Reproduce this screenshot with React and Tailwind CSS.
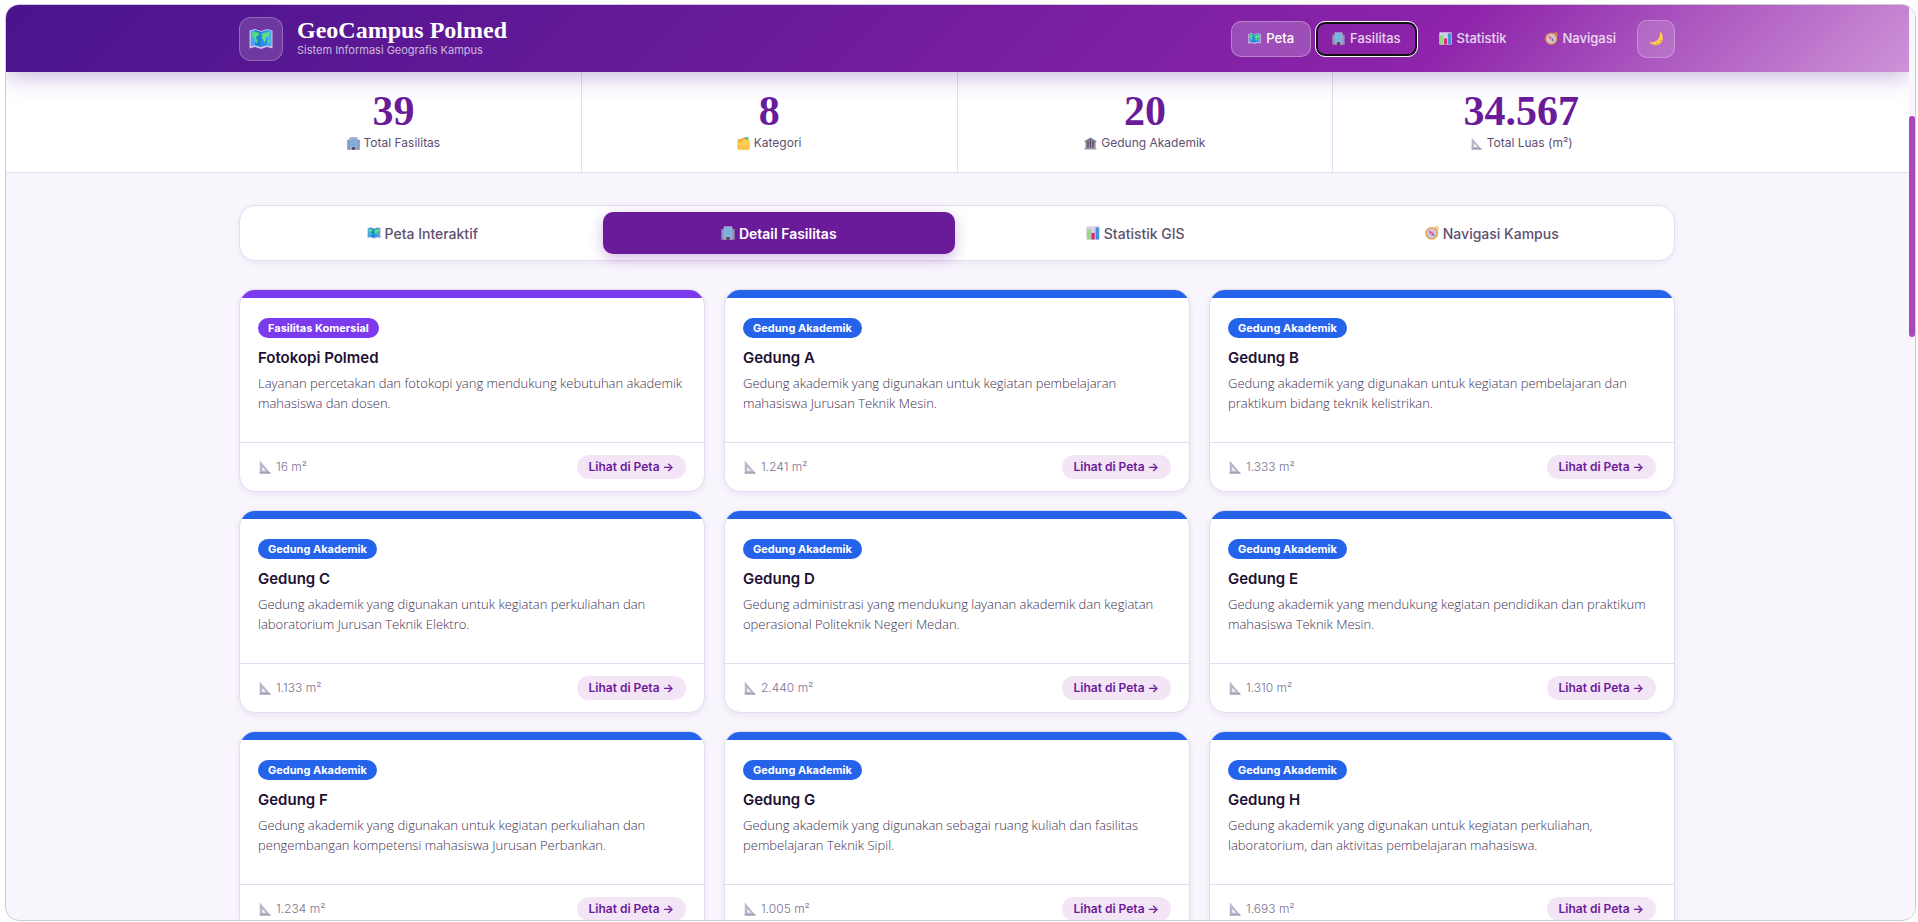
import React from "react";

function MapIcon({ className }) {
  return (
    <svg viewBox="0 0 24 24" className={className} aria-hidden="true">
      <path d="M0.5 3.5 L6 2 L12 4 L18 2 L23.5 3.5 V21.5 L18 20 L12 22 L6 20 L0.5 21.5 Z" fill="#cfc3e6" />
      <path d="M1.8 4 L6 3 L12 5 V20 L6 18.200 L1.800 19.300 Z" fill="#42a5f5" />
      <path d="M12 5 L18 3 L22.200 4 V19.300 L18 18.200 L12 20 Z" fill="#2b8de3" />
      <path d="M6 3 L12 5 V20 L6 18.200 Z" fill="#1f7ed6" />
      <path d="M18 3 L22.200 4 V19.300 L18 18.200 Z" fill="#4aa8f7" />
      <path d="M2.500 6 L6 4.800 L10.500 6.300 L9.500 8.500 L7.500 9.500 L7 11.500 L8.500 12.500 L8.500 14.500 L7 16.800 L6 14 L5.500 11.500 L3.500 9.500 Z" fill="#4fdc7c" />
      <path d="M12.500 7 L16 5.500 L21 5.300 L20.500 8.500 L19 10.500 L17.500 9.500 L16.500 14 L15 15.500 L14 12 L12.500 11 L13.500 9 Z" fill="#5be082" />
      <path d="M18.500 13 L21 12.500 L21.300 15.200 L19 15.300 Z" fill="#4fdc7c" />
    </svg>
  );
}

function BuildingIcon({ className }) {
  return (
    <svg viewBox="0 0 24 24" className={className} aria-hidden="true">
      <path d="M0.500 5 H7 V23.500 H0.500 Z" fill="#8f86a8" />
      <path d="M17 5 H23.500 V23.500 H17 Z" fill="#8f86a8" />
      <rect x="4.500" y="0.500" width="15" height="23" rx="1" fill="#a9a3c0" />
      <rect x="6.500" y="2.500" width="11" height="15.500" fill="#6ec6f5" />
      <path d="M10.200 2.500 V18 M13.800 2.500 V18 M6.500 6.300 H17.500 M6.500 10.200 H17.500 M6.500 14.100 H17.500" stroke="#8796c4" strokeWidth="1" />
      <rect x="9" y="19" width="6" height="4.500" fill="#4a3f63" />
      <path d="M2.500 8 V20.500 M21.500 8 V20.500" stroke="#6fb6e2" strokeWidth="1.300" />
    </svg>
  );
}

function ChartIcon({ className }) {
  return (
    <svg viewBox="0 0 24 24" className={className} aria-hidden="true">
      <rect x="0.500" y="0.500" width="23" height="23" rx="1.500" fill="#d9d2e8" />
      <path d="M1 6.500 H23 M1 12 H23 M1 17.500 H23 M8.300 1 V23 M15.700 1 V23" stroke="#bdb4d2" strokeWidth="0.800" />
      <rect x="2" y="6" width="5.500" height="17" fill="#8fdc80" />
      <rect x="9.300" y="12" width="5.500" height="11" fill="#e0246c" />
      <rect x="16.700" y="2.500" width="5.500" height="20.500" fill="#3f92e0" />
    </svg>
  );
}

function CompassIcon({ className }) {
  return (
    <svg viewBox="0 0 24 24" className={className} aria-hidden="true">
      <circle cx="20" cy="4" r="2.600" fill="none" stroke="#f5a623" strokeWidth="1.800" />
      <circle cx="11.500" cy="12.500" r="11" fill="#e8a04e" />
      <circle cx="11.500" cy="12.500" r="8.300" fill="#d0c5de" />
      <path d="M6.500 7.500 L13.500 11 L10 14.500 Z" fill="#e0315f" />
      <path d="M16.500 17.500 L13.500 11 L10 14.500 Z" fill="#655a80" />
      <circle cx="11.700" cy="12.700" r="1.300" fill="#f4f0fa" />
    </svg>
  );
}

function MoonIcon({ className }) {
  return (
    <svg viewBox="0 0 24 24" className={className} aria-hidden="true">
      <path d="M17.500 1 C26 8 23 22 11.500 23 C6.500 23.300 2.500 20.500 1 17.200 C7 19 13 17 15.800 12 C17.800 8.400 18 4.500 17.500 1 Z" fill="#fbb93c" />
      <path d="M17.500 1 C24 7 22 17.500 12.500 20 C8 21 3.500 19.500 1 17.200 C7 19 13 17 15.800 12 C17.800 8.400 18 4.500 17.500 1 Z" fill="#ffd257" />
      <circle cx="18.500" cy="15" r="1.300" fill="#eb9c35" />
      <circle cx="13" cy="19.500" r="1" fill="#eb9c35" />
    </svg>
  );
}

function FolderIcon({ className }) {
  return (
    <svg viewBox="0 0 24 24" className={className} aria-hidden="true">
      <rect x="13" y="0.500" width="8" height="5" rx="1" fill="#35c07a" />
      <rect x="8" y="2" width="9" height="5" rx="1" fill="#f5a04a" />
      <path d="M1 3.500 H8 L10 5.500 H23 V21 A2 2 0 0 1 21 23 H3 A2 2 0 0 1 1 21 Z" fill="#f9bf45" />
      <path d="M1 9 H8 L11 5 H23 V21 A2 2 0 0 1 21 23 H3 A2 2 0 0 1 1 21 Z" fill="#ffd04f" />
      <path d="M1 15 H23 V21 A2 2 0 0 1 21 23 H3 A2 2 0 0 1 1 21 Z" fill="#ffc34d" />
      <path d="M4 7.500 H9" stroke="#ee6a44" strokeWidth="1.500" />
    </svg>
  );
}

function MuseumIcon({ className }) {
  return (
    <svg viewBox="0 0 24 24" className={className} aria-hidden="true">
      <path d="M12 1 L23 7.500 V9 H1 V7.500 Z" fill="#8a8098" />
      <rect x="3" y="9" width="18" height="11" fill="#4d4560" />
      <path d="M5 9.500 V20 M9.700 9.500 V20 M14.300 9.500 V20 M19 9.500 V20" stroke="#a79fb5" strokeWidth="2.200" />
      <rect x="1" y="20" width="22" height="3" fill="#9c93ab" />
      <circle cx="12" cy="5.800" r="1.400" fill="#4d4560" />
    </svg>
  );
}

function RulerIcon({ className }) {
  return (
    <svg viewBox="0 0 24 24" className={className} aria-hidden="true">
      <path fillRule="evenodd" d="M3 1 L22 23 H3 Z M7.500 12 V18.500 H13.200 Z" fill="#bdb5cb" />
      <path d="M3 20.500 H20 L22 23 H3 Z" fill="#9f96b0" />
      <path d="M6 21 V22.500 M9 21 V22.500 M12 21 V22.500 M15 21 V22.500" stroke="#d9d3e3" strokeWidth="0.800" />
    </svg>
  );
}

const navItems = [
  { label: "Peta", Icon: MapIcon, style: "border-white/30 bg-white/20 text-white" },
  {
    label: "Fasilitas",
    Icon: BuildingIcon,
    style: "border-white text-white/80 shadow-[inset_0_0_0_2px_#101010]",
  },
  { label: "Statistik", Icon: ChartIcon, style: "border-transparent text-white/80" },
  { label: "Navigasi", Icon: CompassIcon, style: "border-transparent text-white/80" },
];

const stats = [
  { value: "39", label: "Total Fasilitas", Icon: BuildingIcon },
  { value: "8", label: "Kategori", Icon: FolderIcon },
  { value: "20", label: "Gedung Akademik", Icon: MuseumIcon },
  { value: "34.567", label: "Total Luas (m²)", Icon: RulerIcon },
];

const tabs = [
  { label: "Peta Interaktif", Icon: MapIcon },
  { label: "Detail Fasilitas", Icon: BuildingIcon, active: true },
  { label: "Statistik GIS", Icon: ChartIcon },
  { label: "Navigasi Kampus", Icon: CompassIcon },
];

const facilities = [
  ["Fotokopi Polmed", "Layanan percetakan dan fotokopi yang mendukung kebutuhan akademik", "mahasiswa dan dosen.", "16", "komersial"],
  ["Gedung A", "Gedung akademik yang digunakan untuk kegiatan pembelajaran", "mahasiswa Jurusan Teknik Mesin.", "1.241"],
  ["Gedung B", "Gedung akademik yang digunakan untuk kegiatan pembelajaran dan", "praktikum bidang teknik kelistrikan.", "1.333"],
  ["Gedung C", "Gedung akademik yang digunakan untuk kegiatan perkuliahan dan", "laboratorium Jurusan Teknik Elektro.", "1.133"],
  ["Gedung D", "Gedung administrasi yang mendukung layanan akademik dan kegiatan", "operasional Politeknik Negeri Medan.", "2.440"],
  ["Gedung E", "Gedung akademik yang mendukung kegiatan pendidikan dan praktikum", "mahasiswa Teknik Mesin.", "1.310"],
  ["Gedung F", "Gedung akademik yang digunakan untuk kegiatan perkuliahan dan", "pengembangan kompetensi mahasiswa Jurusan Perbankan.", "1.234"],
  ["Gedung G", "Gedung akademik yang digunakan sebagai ruang kuliah dan fasilitas", "pembelajaran Teknik Sipil.", "1.005"],
  ["Gedung H", "Gedung akademik yang digunakan untuk kegiatan perkuliahan,", "laboratorium, dan aktivitas pembelajaran mahasiswa.", "1.693"],
];

function FacilityCard({ name, lines, area, commercial }) {
  const tone = commercial ? "bg-[#7c3aed]" : "bg-[#2563eb]";
  return (
    <article className="flex flex-col overflow-hidden rounded-2xl border border-[#e4dcf1] bg-white shadow-[0_2px_6px_rgba(74,20,140,0.08)]">
      <div className={`h-2 ${tone}`} />
      <div className="flex flex-1 flex-col items-start px-[18px] pt-5 pb-[29px]">
        <span className={`rounded-full px-[10px] text-[11px] leading-5 font-bold text-white ${tone}`}>
          {commercial ? "Fasilitas Komersial" : "Gedung Akademik"}
        </span>
        <h3 className="mt-2 text-[15px] leading-6 font-semibold text-[#1e1033]">{name}</h3>
        <p className="mt-[3px] font-['Open_Sans','Liberation_Sans',sans-serif] text-[13px] leading-5 font-light text-[#3d3050] 2xl:whitespace-nowrap">
          {lines[0]}
          <br />
          {lines[1]}
        </p>
      </div>
      <div className="flex items-center justify-between border-t border-[#e4dcf1] px-[18px] py-3">
        <span className="flex items-center gap-1 text-[12px] leading-5 font-light text-[#7d7192]">
          <RulerIcon className="size-[14px]" />
          {area} m²
        </span>
        <button type="button" className="rounded-full bg-[#f3e5f5] px-3 text-[12px] leading-6 font-semibold text-[#6a1b9a]">
          Lihat di Peta →
        </button>
      </div>
    </article>
  );
}

export default function App() {
  return (
    <div className="h-screen bg-white pt-1 pr-[2px] pb-[1px] pl-[5px] font-['Inter','Liberation_Sans',sans-serif]">
      <div className="flex h-full overflow-hidden rounded-[14px] border border-[#cfcbd3] bg-[#f8f5fc]">
        <div className="min-w-0 flex-1 overflow-hidden">
          <header className="relative bg-[linear-gradient(135deg,#4a148c_0%,#6a1b9a_40%,#8e24aa_75%,#ce93d8_100%)] shadow-[0_6px_22px_rgba(74,20,140,0.28)]">
            <div className="mx-auto flex h-[67px] max-w-[1503px] items-center justify-between pr-[34px] pl-[33px]">
              <div className="flex items-center gap-[14px]">
                <div className="flex size-11 items-center justify-center rounded-xl border border-white/25 bg-white/15">
                  <MapIcon className="size-6" />
                </div>
                <div className="pb-[2px]">
                  <h1 className="font-['Liberation_Serif',serif] text-2xl leading-6 font-bold text-white">GeoCampus Polmed</h1>
                  <p className="text-[11px] leading-4 text-white/70">Sistem Informasi Geografis Kampus</p>
                </div>
              </div>
              <nav className="flex items-center gap-1">
                {navItems.map(({ label, Icon, style }) => (
                  <button
                    key={label}
                    type="button"
                    className={`flex h-9 items-center gap-[5px] rounded-[10px] border px-4 text-[13px] font-medium ${style}`}
                  >
                    <Icon className="size-[13px]" />
                    {label}
                  </button>
                ))}
                <button
                  type="button"
                  aria-label="Mode gelap"
                  className="flex size-[38px] items-center justify-center rounded-[10px] border border-white/25 bg-white/15"
                >
                  <MoonIcon className="size-[15px]" />
                </button>
              </nav>
            </div>
          </header>

          <section className="border-b border-[#e4dcf1] bg-white">
            <div className="mx-auto grid max-w-[1503px] grid-cols-4 divide-x divide-[#e4dcf1]">
              {stats.map(({ value, label, Icon }) => (
                <div key={label} className="flex flex-col items-center gap-[2px] py-[19px]">
                  <div className="font-['Liberation_Serif',serif] text-[42px] leading-10 font-bold text-[#6a1b9a]">{value}</div>
                  <div className="flex items-center gap-1 text-[12px] leading-5 text-[#5d5070]">
                    <Icon className="size-[13px]" />
                    {label}
                  </div>
                </div>
              ))}
            </div>
          </section>

          <main className="mx-auto max-w-[1503px] pt-8 pr-[34px] pl-[33px]">
            <div className="grid grid-cols-4 gap-1 rounded-2xl border border-[#e4dcf1] bg-white p-[6px] shadow-[0_2px_6px_rgba(74,20,140,0.06)]">
              {tabs.map(({ label, Icon, active }) => (
                <button
                  key={label}
                  type="button"
                  className={
                    active
                      ? "flex h-[42px] items-center justify-center gap-1 rounded-[10px] bg-[#6a1b9a] text-[14px] font-semibold text-white shadow-[0_4px_14px_rgba(106,27,154,0.3)]"
                      : "flex h-[42px] items-center justify-center gap-1 rounded-[10px] text-[14px] font-medium text-[#5d5070]"
                  }
                >
                  <Icon className="size-[14px]" />
                  {label}
                </button>
              ))}
            </div>

            <div className="mt-7 grid grid-cols-3 gap-x-[19px] gap-y-[18px]">
              {facilities.map(([name, first, second, area, kind]) => (
                <FacilityCard key={name} name={name} lines={[first, second]} area={area} commercial={kind === "komersial"} />
              ))}
            </div>
          </main>
        </div>

        <div className="w-[6px] bg-[#f8f5fc] pt-[111px]" aria-hidden="true">
          <div className="h-[221px] rounded-full bg-[#ab47bc]" />
        </div>
      </div>
    </div>
  );
}
